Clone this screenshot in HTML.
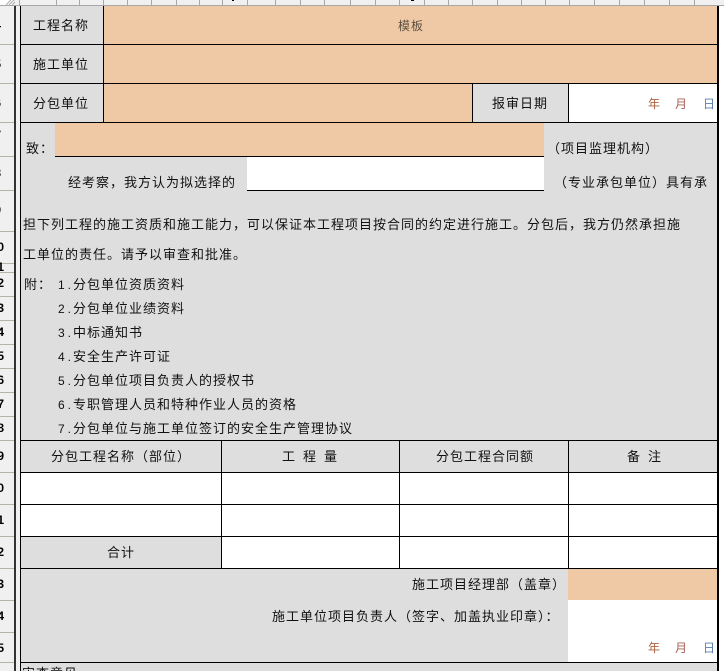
<!DOCTYPE html>
<html lang="zh"><head><meta charset="utf-8"><title>分包单位资质报审表</title>
<style>
html,body{margin:0;padding:0;background:#fff}
#p{position:relative;width:724px;height:671px;overflow:hidden;background:#fff;font-family:"Liberation Sans","Noto Sans CJK SC","WenQuanYi Zen Hei",sans-serif;font-size:13px;color:#111}
#p div{position:absolute}
.t{white-space:nowrap;letter-spacing:1px;line-height:16px;height:16px;transform:translateY(1px)}
.s{font-size:12px;letter-spacing:3px}
.k{background:#000}
.g{background:#dedede}.o{background:#efc8a6}.w{background:#fff}
.h{background:#b4b4a8;left:0;width:14px;height:1px}
.c{background:#a8a8a8;top:0;width:1px;height:5px}
.n{left:-5px;width:9px;text-align:right;font:bold 12px/14px "Liberation Sans",sans-serif;color:#000;overflow:hidden}
.e{left:-8px}
.d{font-size:12px;letter-spacing:0}
</style></head><body><div id="p">
<div style="left:0;top:0;width:14px;height:671px;background:#f0f0f0"></div>
<div style="left:14px;top:0;width:2px;height:671px;background:#333"></div>
<div style="left:16px;top:0;width:4px;height:671px;background:#f0f0f0"></div>
<div style="left:0;top:0;width:724px;height:5px;background:#f0f0f0"></div>
<div style="left:0;top:5px;width:724px;height:1px;background:#a8a8a8"></div>
<div style="left:0;top:0;width:14px;height:5px;background:#fff"></div>
<svg style="position:absolute;left:6px;top:0" width="9" height="5"><path d="M0 5L5 0M3 5L8 0M6 5L9 2" stroke="#aaa" fill="none"/></svg>
<div class="c" style="left:19px"></div><div class="c" style="left:56px"></div><div class="c" style="left:79px"></div><div class="c" style="left:103px"></div><div class="c" style="left:127px"></div><div class="c" style="left:151px"></div><div class="c" style="left:176px"></div><div class="c" style="left:199px"></div><div class="c" style="left:222px"></div><div class="c" style="left:247px"></div><div class="c" style="left:275px"></div><div class="c" style="left:300px"></div><div class="c" style="left:324px"></div><div class="c" style="left:350px"></div><div class="c" style="left:375px"></div><div class="c" style="left:399px"></div><div class="c" style="left:424px"></div><div class="c" style="left:448px"></div><div class="c" style="left:472px"></div><div class="c" style="left:497px"></div><div class="c" style="left:521px"></div><div class="c" style="left:545px"></div><div class="c" style="left:569px"></div><div class="c" style="left:594px"></div><div class="c" style="left:619px"></div><div class="c" style="left:644px"></div><div class="c" style="left:669px"></div><div class="c" style="left:694px"></div>
<div class="k" style="left:232px;top:0;width:2px;height:1px"></div><div class="k" style="left:411px;top:0;width:3px;height:1px"></div>

<div class="h" style="top:44px"></div><div class="h" style="top:83px"></div><div class="h" style="top:122px"></div><div class="h" style="top:156px"></div><div class="h" style="top:190px"></div><div class="h" style="top:231px"></div><div class="h" style="top:263px"></div><div class="h" style="top:272px"></div><div class="h" style="top:296px"></div><div class="h" style="top:320px"></div><div class="h" style="top:344px"></div><div class="h" style="top:368px"></div><div class="h" style="top:392px"></div><div class="h" style="top:416px"></div><div class="h" style="top:440px"></div><div class="h" style="top:472px"></div><div class="h" style="top:504px"></div><div class="h" style="top:536px"></div><div class="h" style="top:568px"></div><div class="h" style="top:600px"></div><div class="h" style="top:632px"></div><div class="h" style="top:662px"></div>
<div class="n e" style="top:18px">4</div><div class="n e" style="top:57px">5</div><div class="n e" style="top:96px">6</div><div class="n e" style="top:128px">7</div><div class="n e" style="top:166px">8</div><div class="n e" style="top:203px">9</div><div class="n" style="top:240px">0</div><div class="n" style="top:260px">1</div><div class="n" style="top:276px">2</div><div class="n" style="top:301px">3</div><div class="n" style="top:325px">4</div><div class="n" style="top:349px">5</div><div class="n" style="top:373px">6</div><div class="n" style="top:397px">7</div><div class="n" style="top:421px">8</div><div class="n" style="top:449px">9</div><div class="n" style="top:481px">0</div><div class="n" style="top:513px">1</div><div class="n" style="top:545px">2</div><div class="n" style="top:577px">3</div><div class="n" style="top:609px">4</div><div class="n" style="top:641px">5</div>

<div class="g" style="left:21px;top:6px;width:697px;height:665px"></div>
<div class="o" style="left:104px;top:6px;width:614px;height:77px"></div>
<div class="o" style="left:104px;top:84px;width:368px;height:38px"></div>
<div class="w" style="left:569px;top:84px;width:149px;height:38px"></div>
<div class="o" style="left:55px;top:123px;width:489px;height:33px"></div>
<div class="w" style="left:247px;top:157px;width:297px;height:33px"></div>
<div class="w" style="left:21px;top:473px;width:697px;height:63px"></div>
<div class="w" style="left:222px;top:537px;width:496px;height:31px"></div>
<div class="o" style="left:568px;top:569px;width:150px;height:31px"></div>
<div class="w" style="left:568px;top:600px;width:150px;height:62px"></div>

<div class="k" style="left:20px;top:6px;width:1px;height:665px"></div>
<div class="k" style="left:717px;top:6px;width:2px;height:665px"></div>
<div class="k" style="left:21px;top:44px;width:696px;height:1px"></div>
<div class="k" style="left:21px;top:83px;width:696px;height:1px"></div>
<div class="k" style="left:21px;top:122px;width:696px;height:1px"></div>
<div class="k" style="left:103px;top:6px;width:1px;height:116px"></div>
<div class="k" style="left:472px;top:84px;width:1px;height:38px"></div>
<div class="k" style="left:568px;top:84px;width:1px;height:38px"></div>
<div class="k" style="left:55px;top:156px;width:489px;height:1px"></div>
<div class="k" style="left:247px;top:190px;width:297px;height:1px"></div>
<div class="k" style="left:21px;top:440px;width:696px;height:1px"></div>
<div class="k" style="left:21px;top:472px;width:696px;height:1px"></div>
<div class="k" style="left:21px;top:504px;width:696px;height:1px"></div>
<div class="k" style="left:21px;top:536px;width:696px;height:1px"></div>
<div class="k" style="left:21px;top:568px;width:696px;height:1px"></div>
<div class="k" style="left:21px;top:662px;width:696px;height:1px"></div>
<div class="k" style="left:221px;top:440px;width:1px;height:128px"></div>
<div class="k" style="left:399px;top:440px;width:1px;height:128px"></div>
<div class="k" style="left:568px;top:440px;width:1px;height:128px"></div>

<div class="t" style="left:33px;top:17px">工程名称</div>
<div class="t" style="left:398px;top:17px;font-size:12px;color:#5d5040">模板</div>
<div class="t" style="left:33px;top:56px">施工单位</div>
<div class="t" style="left:33px;top:95px">分包单位</div>
<div class="t" style="left:492px;top:95px">报审日期</div>
<div class="t d" style="left:648px;top:95px;color:#b0603c">年</div><div class="t d" style="left:675px;top:95px;color:#a86050">月</div><div class="t d" style="left:703px;top:95px;color:#5a80b0">日</div>
<div class="t" style="left:26px;top:140px">致：</div>
<div class="t" style="left:547px;top:140px">（项目监理机构）</div>
<div class="t" style="left:68px;top:174px">经考察，我方认为拟选择的</div>
<div class="t" style="left:554px;top:174px">（专业承包单位）具有承</div>
<div class="t" style="left:23px;top:216px">担下列工程的施工资质和施工能力，可以保证本工程项目按合同的约定进行施工。分包后，我方仍然承担施</div>
<div class="t" style="left:23px;top:246px">工单位的责任。请予以审查和批准。</div>
<div class="t" style="left:24px;top:276px">附：</div>
<div class="t s" style="left:58px;top:276px">1.</div><div class="t" style="left:73px;top:276px">分包单位资质资料</div>
<div class="t s" style="left:58px;top:300px">2.</div><div class="t" style="left:73px;top:300px">分包单位业绩资料</div>
<div class="t s" style="left:58px;top:324px">3.</div><div class="t" style="left:73px;top:324px">中标通知书</div>
<div class="t s" style="left:58px;top:348px">4.</div><div class="t" style="left:73px;top:348px">安全生产许可证</div>
<div class="t s" style="left:58px;top:372px">5.</div><div class="t" style="left:73px;top:372px">分包单位项目负责人的授权书</div>
<div class="t s" style="left:58px;top:396px">6.</div><div class="t" style="left:73px;top:396px">专职管理人员和特种作业人员的资格</div>
<div class="t s" style="left:58px;top:420px">7.</div><div class="t" style="left:73px;top:420px">分包单位与施工单位签订的安全生产管理协议</div>
<div class="t" style="left:51px;top:448px">分包工程名称（部位）</div>
<div class="t" style="left:282px;top:448px;letter-spacing:8px">工程量</div>
<div class="t" style="left:436px;top:448px">分包工程合同额</div>
<div class="t" style="left:627px;top:448px;letter-spacing:8px">备注</div>
<div class="t" style="left:107px;top:544px">合计</div>
<div class="t" style="left:412px;top:576px">施工项目经理部（盖章）</div>
<div class="t" style="left:272px;top:608px">施工单位项目负责人（签字、加盖执业印章）：</div>
<div class="t d" style="left:648px;top:639px;color:#b0603c">年</div><div class="t d" style="left:675px;top:639px;color:#a86050">月</div><div class="t d" style="left:703px;top:639px;color:#5a80b0">日</div>
<div class="t" style="left:22px;top:665px">审查意见</div>
</div></body></html>
